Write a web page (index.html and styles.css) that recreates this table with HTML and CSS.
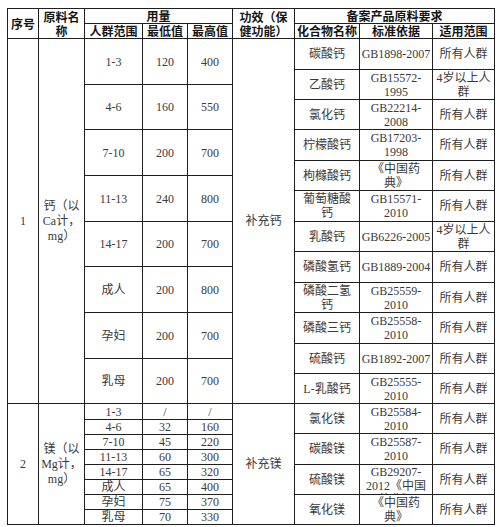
FILE: index.html
```html
<!DOCTYPE html>
<html lang="zh">
<head>
<meta charset="utf-8">
<title>营养素补充剂原料目录</title>
<link rel="stylesheet" href="styles.css">
</head>
<body>
<div class="sheet">
  <div class="c hd rows2">序号</div>
  <div class="c hd rows2">原料名称</div>
  <div class="c hd cols3">用量</div>
  <div class="c hd rows2 eff-hd">功效（保健功能）</div>
  <div class="c hd cols3">备案产品原料要求</div>
  <div class="c hd">人群范围</div>
  <div class="c hd">最低值</div>
  <div class="c hd">最高值</div>
  <div class="c hd">化合物名称</div>
  <div class="c hd">标准依据</div>
  <div class="c hd">适用范围</div>

  <div class="c">1</div>
  <div class="c name">钙（以Ca计，mg）</div>
  <div class="dose dose-ca cols3">
    <div class="c">1-3</div><div class="c">120</div><div class="c">400</div>
    <div class="c">4-6</div><div class="c">160</div><div class="c">550</div>
    <div class="c">7-10</div><div class="c">200</div><div class="c">700</div>
    <div class="c">11-13</div><div class="c">240</div><div class="c">800</div>
    <div class="c">14-17</div><div class="c">200</div><div class="c">700</div>
    <div class="c">成人</div><div class="c">200</div><div class="c">800</div>
    <div class="c">孕妇</div><div class="c">200</div><div class="c">700</div>
    <div class="c">乳母</div><div class="c">200</div><div class="c">700</div>
  </div>
  <div class="c">补充钙</div>
  <div class="req req-ca cols3">
    <div class="c cmp">碳酸钙</div><div class="c">GB1898-2007</div><div class="c">所有人群</div>
    <div class="c cmp">乙酸钙</div><div class="c">GB15572-1995</div><div class="c">4岁以上人群</div>
    <div class="c cmp">氯化钙</div><div class="c">GB22214-2008</div><div class="c">所有人群</div>
    <div class="c cmp">柠檬酸钙</div><div class="c">GB17203-1998</div><div class="c">所有人群</div>
    <div class="c cmp">枸橼酸钙</div><div class="c">《中国药典》</div><div class="c">所有人群</div>
    <div class="c cmp">葡萄糖酸钙</div><div class="c">GB15571-2010</div><div class="c">所有人群</div>
    <div class="c cmp">乳酸钙</div><div class="c">GB6226-2005</div><div class="c">4岁以上人群</div>
    <div class="c cmp">磷酸氢钙</div><div class="c">GB1889-2004</div><div class="c">所有人群</div>
    <div class="c cmp">磷酸二氢钙</div><div class="c">GB25559-2010</div><div class="c">所有人群</div>
    <div class="c cmp">磷酸三钙</div><div class="c">GB25558-2010</div><div class="c">所有人群</div>
    <div class="c cmp">硫酸钙</div><div class="c">GB1892-2007</div><div class="c">所有人群</div>
    <div class="c cmp">L-乳酸钙</div><div class="c">GB25555-2010</div><div class="c">所有人群</div>
  </div>

  <div class="c">2</div>
  <div class="c name">镁（以Mg计，mg）</div>
  <div class="dose dose-mg cols3">
    <div class="c">1-3</div><div class="c">/</div><div class="c">/</div>
    <div class="c">4-6</div><div class="c">32</div><div class="c">160</div>
    <div class="c">7-10</div><div class="c">45</div><div class="c">220</div>
    <div class="c">11-13</div><div class="c">60</div><div class="c">300</div>
    <div class="c">14-17</div><div class="c">65</div><div class="c">320</div>
    <div class="c">成人</div><div class="c">65</div><div class="c">400</div>
    <div class="c">孕妇</div><div class="c">75</div><div class="c">370</div>
    <div class="c">乳母</div><div class="c">70</div><div class="c">330</div>
  </div>
  <div class="c">补充镁</div>
  <div class="req req-mg cols3">
    <div class="c cmp">氯化镁</div><div class="c">GB25584-2010</div><div class="c">所有人群</div>
    <div class="c cmp">碳酸镁</div><div class="c">GB25587-2010</div><div class="c">所有人群</div>
    <div class="c cmp">硫酸镁</div><div class="c">GB29207-2012《中国药典》</div><div class="c">所有人群</div>
    <div class="c cmp">氧化镁</div><div class="c">《中国药典》</div><div class="c">所有人群</div>
  </div>
</div>
</body>
</html>
```

FILE: styles.css
```css
html, body {
  margin: 0;
  padding: 0;
  background: #ffffff;
}

body {
  font-family: "Liberation Serif", "Noto Sans CJK SC", serif;
  font-size: 12px;
  line-height: 14px;
  color: #3a3a3a;
  text-spacing-trim: space-all;
}

.sheet {
  display: grid;
  grid-template-columns: 30px 45px 57px 44px 44px 61px 64px 72px 61px;
  grid-template-rows: 14px 14px 364px 120px;
  gap: 1px;
  padding: 1px;
  width: max-content;
  margin: 8px 0 0 7px;
  background: #1e1e1e;
}

.rows2 {
  grid-row: span 2;
}

.cols3 {
  grid-column: span 3;
}

.c {
  background: #ffffff;
  display: flex;
  align-items: safe center;
  justify-content: center;
  text-align: center;
  overflow: hidden;
  padding: 0 1px;
  min-width: 0;
  min-height: 0;
}

.hd {
  font-family: "Noto Sans CJK SC", sans-serif;
  font-weight: 700;
  color: #151515;
  padding: 0;
  line-height: 14px;
  overflow: visible;
}

.eff-hd {
  padding: 0 3px;
}

.name {
  line-height: 15px;
}

.cmp {
  padding: 0 3px;
}

.dose,
.req {
  display: grid;
  gap: 1px;
  background: #1e1e1e;
}

.dose {
  grid-template-columns: 57px 44px 44px;
}

.req {
  grid-template-columns: 64px 72px 61px;
}

.dose-ca {
  grid-template-rows: 45px 44px 45px 45px 44px 45px 45px 44px;
}

.dose-mg {
  grid-template-rows: 15px 14px 14px 14px 14px 14px 14px 14px;
}

.req-ca {
  grid-template-rows: 30px 29px 29px 30px 29px 30px 29px 30px 29px 30px 29px 29px;
}

.req-mg {
  grid-template-rows: 29px 30px 29px 29px;
}
```
